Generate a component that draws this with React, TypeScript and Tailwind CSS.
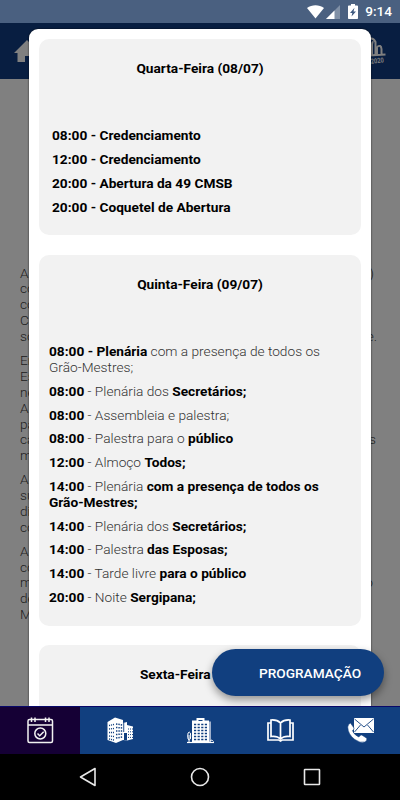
import { Fragment } from 'react'

type Line = { start: string; end?: string; width?: string }

const paragraphs: Line[][] = [
  [
    { start: 'A', end: ')', width: 'w-[354px]' },
    { start: 'co' },
    { start: 'co' },
    { start: 'C' },
    { start: 'so', end: 'e.', width: 'w-[357px]' },
  ],
  [
    { start: 'En' },
    { start: 'Es' },
    { start: 'ne' },
    { start: 'A' },
    { start: 'pa' },
    { start: 'ca', end: 's', width: 'w-[356px]' },
    { start: 'm' },
  ],
  [{ start: 'A' }, { start: 'su' }, { start: 'di' }, { start: 'co' }],
  [
    { start: 'A' },
    { start: 'co' },
    { start: 'm', end: 'o', width: 'w-[353px]' },
    { start: 'de' },
    { start: 'M' },
  ],
]

// text between asterisks is bold
const thursday = [
  '*08:00 - Plenária* com a presença de todos os Grão-Mestres;',
  '*08:00* - Plenária dos *Secretários;*',
  '*08:00* - Assembleia e palestra;',
  '*08:00* - Palestra para o *público*',
  '*12:00* - Almoço *Todos;*',
  '*14:00* - Plenária *com a presença de todos os Grão-Mestres;*',
  '*14:00* - Plenária dos *Secretários;*',
  '*14:00* - Palestra *das Esposas;*',
  '*14:00* - Tarde livre *para o público*',
  '*20:00* - Noite *Sergipana;*',
]

const wednesday = [
  '08:00 - Credenciamento',
  '12:00 - Credenciamento',
  '20:00 - Abertura da 49 CMSB',
  '20:00 - Coquetel de Abertura',
]

function RichText({ text }: { text: string }) {
  return (
    <>
      {text.split('*').map((part, i) => (
        <Fragment key={i}>
          {i % 2 ? <b className="font-bold text-black">{part}</b> : part}
        </Fragment>
      ))}
    </>
  )
}

function StatusBar() {
  return (
    <div className="flex h-[23px] shrink-0 items-center justify-end bg-[#4a6080] pr-[8px] text-white">
      <svg className="mr-[2px] h-[14px] w-[17px]" viewBox="0 0 17 14" fill="currentColor">
        <path d="M0 3C5-.7 12-.7 17 3L8.5 13.5z" />
      </svg>
      <svg className="mr-[8px] h-[14px] w-[14px]" viewBox="0 0 14 14" fill="currentColor">
        <path d="M14 0v14H0z" opacity=".3" />
        <path d="M8.5 5.5V14H0z" />
      </svg>
      <svg className="mr-[7px] h-[15px] w-[10px]" viewBox="0 0 10 15">
        <path d="M3 0h4v1.5h2.2q.8 0 .8.8v11.900q0 .8-.8.8H.8q-.8 0-.8-.8V2.300q0-.8.8-.8H3z" fill="#fff" />
        <path d="M6.500 3.800L2 9h2.300L3.500 12.500 8 7.500H5.500z" fill="#3f5a80" />
      </svg>
      <span className="pt-[1px] text-[13.600px] font-medium leading-none">9:14</span>
    </div>
  )
}

function Header() {
  return (
    <div className="flex h-[56px] shrink-0 items-center justify-between bg-[#081e41] pl-[14px] pr-[14px]">
      <svg className="h-[24px] w-[26px]" viewBox="0 0 26 24" fill="#808080">
        <path d="M13 1L0 14h3.500v9H11v-6h4v6h7.500v-9H26z" />
      </svg>
      <svg className="h-[30px] w-[36px]" viewBox="0 0 36 30" fill="none" stroke="#808080" strokeWidth="2">
        <path d="M16 18V6q6-7 9.500 0v13M22 19V9q0-3 1.500-3M27 18V11M27 11q4-3 4.500 2v5M10 20l25.500-1.500" />
        <text x="12" y="27.500" fontSize="7" fontWeight="700" fill="#808080" stroke="none" textLength="22" lengthAdjust="spacingAndGlyphs" transform="rotate(-7 24 26)">SE/2020</text>
      </svg>
    </div>
  )
}

function CalendarIcon() {
  return (
    <svg className="size-[27px]" viewBox="0 0 27 27" fill="none" stroke="#f2f2f2" strokeWidth="1.500">
      <rect x="1" y="2.500" width="24.500" height="23" rx="1.500" />
      <path d="M1 8h24.500M4.500 .5V5M8 .5V5M18.500 .5V5M22 .5V5" />
      <circle cx="13.300" cy="16.500" r="5.500" />
      <path d="M10.500 16.500l2.200 2.200 4-4" />
    </svg>
  )
}

function HotelIcon() {
  return (
    <svg className="size-[27px]" viewBox="0 0 27 27">
      <path d="M.5 5L8 .5 16 3v3l4-1v3l6 1.500V22l-6 1.500-4-.5-7 3-8.500-3z" fill="#fff" />
      <path d="M17 16h3v7.500l-3-.5zM16.300 5.500h.9V15h-.9z" fill="#113f7f" />
      <path d="M2 8.500l5-1M2 12l5-.5M2 15.500h5M2 19l5 .5M2 22l5 1" stroke="#113f7f" strokeWidth="1.300" strokeDasharray="1.100 .9" fill="none" />
      <path d="M9 7l6.500 1M9 10.500l6.500.5M9 14h6.500M9 17.500l6.500-.5M9 21l6.500-1" stroke="#113f7f" strokeWidth="1.500" strokeDasharray="1.400 1" fill="none" />
      <path d="M21 12h5M21 14.800h5M21 17.600h5M21 20.400h5" stroke="#113f7f" strokeWidth="1" strokeDasharray="1 1" fill="none" />
    </svg>
  )
}

function TowerIcon() {
  return (
    <svg className="size-[27px]" viewBox="0 0 27 27" fill="none" stroke="#fff">
      <path d="M5 25V3.500h4.500V1h8v2.500H22V25z" fill="#fff" stroke="none" />
      <path d="M22 4.500h2V25h-2z" fill="#9fb0cc" stroke="none" />
      <path d="M7 7.500h14M7 10.500h14M7 13.500h14M7 16.500h14M7 19.500h14M7 22.500h14" stroke="#113f7f" strokeWidth="1.700" strokeDasharray="2.200 1.400" />
      <path d="M11.500 3.500h4" stroke="#113f7f" strokeWidth="1" />
      <path d="M2 25.500V18M.7 19q0-4 1.500-4t1.500 4-1.500 4-1.500-4M23 24.500q1-2.500 2.500-1l1 1" strokeWidth="1" />
      <path d="M0 25.500h27" strokeWidth="1.200" />
    </svg>
  )
}

function BookIcon() {
  return (
    <svg className="size-[27px]" viewBox="0 0 27 27" fill="none" stroke="#fff" strokeWidth="1.700">
      <path d="M13.500 6Q10 2.500 4 3v16.500q6-1 9.500 2.500 3.500-3.500 9.500-2.500V3Q17 2.500 13.500 6v16" />
      <path d="M4 6H1v17h11l1.500 1 1.500-1h11V6h-3" />
    </svg>
  )
}

function ContactIcon() {
  return (
    <svg className="size-[27px]" viewBox="0 0 27 27">
      <path d="M7 1h20v15H7z" fill="#fff" />
      <path d="M7.500 2L17 10l9.500-8M7.500 15l6-7M26.500 15l-6-7" fill="none" stroke="#113f7f" strokeWidth=".9" />
      <path d="M.7 10Q1 7 3.500 6l3.500 5q.5 1-1.500 2.700 1.500 4 6.300 6.300 1.700-2.500 3-2l5 3.200q.7 2.300-2 3.800-4.500 1.500-10-2.500Q1 17.500.7 10z" fill="#fff" stroke="#113f7f" strokeWidth=".6" />
    </svg>
  )
}

const tabs = [CalendarIcon, HotelIcon, TowerIcon, BookIcon, ContactIcon]

export default function App() {
  return (
    <div className="relative flex h-[800px] w-[400px] flex-col overflow-hidden bg-[#808080] font-[Roboto,sans-serif]">
      <StatusBar />
      <Header />

      <div className="flex-1 overflow-hidden pl-[20px] pt-[186.500px] text-[13.700px] font-light leading-[15.900px] text-black/80">
        {paragraphs.map((lines, i) => (
          <div key={i} className="mb-[7.900px]">
            {lines.map((line, j) => (
              <div key={j} className={`flex justify-between ${line.width || ''}`}>
                <span>{line.start}</span>
                {line.end && <span>{line.end}</span>}
              </div>
            ))}
          </div>
        ))}
      </div>

      <div className="absolute left-[29px] top-[29px] h-[677px] w-[342px] overflow-hidden rounded-t-[9px] bg-white px-[10px] pt-[10px] text-[13.700px] leading-[15.900px] shadow-[0_0_2px_rgba(0,0,0,0.8)]">
        <section className="mb-[20px] h-[196px] rounded-[10px] bg-[#f2f2f2] px-[13px] pt-[22px] font-bold text-black">
          <h2 className="mb-[51.300px] text-center">Quarta-Feira (08/07)</h2>
          {wednesday.map(item => (
            <p key={item} className="mb-[7.900px]">{item}</p>
          ))}
        </section>

        <section className="mb-[19px] h-[371px] rounded-[10px] bg-[#f2f2f2] px-[10px] pt-[22px] font-light text-[#333]">
          <h2 className="mb-[51.300px] text-center font-bold text-black">Quinta-Feira (09/07)</h2>
          {thursday.map(item => (
            <p key={item} className="mb-[7.850px] pr-[20px]"><RichText text={item} /></p>
          ))}
        </section>

        <section className="h-[197px] rounded-[10px] bg-[#f2f2f2] pt-[22px] font-bold text-black">
          <h2 className="text-center">Sexta-Feira (10/07)</h2>
        </section>
      </div>

      <button className="absolute left-[212px] top-[649px] h-[47px] w-[172px] rounded-full bg-[#113f7f] pl-[24px] pt-[2px] text-[13.700px] font-medium text-white shadow-[0_4px_8px_rgba(0,0,0,0.4)]">
        PROGRAMAÇÃO
      </button>

      <nav className="relative grid h-[48px] shrink-0 grid-cols-5 border-t border-[#08086a] bg-[#113f7f]">
        {tabs.map((Icon, i) => (
          <div key={i} className={`flex items-center justify-center pb-[1px] ${i === 0 ? 'bg-[#150035]' : ''}`}>
            <Icon />
          </div>
        ))}
      </nav>

      <div className="flex h-[46px] shrink-0 items-center justify-between bg-black pl-[79px] pr-[79px]">
        <svg className="h-[20px] w-[18px]" viewBox="0 0 18 20" fill="none" stroke="#e8e8e8" strokeWidth="1.600">
          <path d="M16 1.500v17L1.500 10z" strokeLinejoin="round" />
        </svg>
        <svg className="size-[20px]" viewBox="0 0 20 20" fill="none" stroke="#e8e8e8" strokeWidth="1.600">
          <circle cx="10" cy="10" r="8.500" />
        </svg>
        <svg className="size-[18px]" viewBox="0 0 18 18" fill="none" stroke="#e8e8e8" strokeWidth="1.600">
          <rect x="1.500" y="1.500" width="15" height="15" rx=".5" />
        </svg>
      </div>
    </div>
  )
}
